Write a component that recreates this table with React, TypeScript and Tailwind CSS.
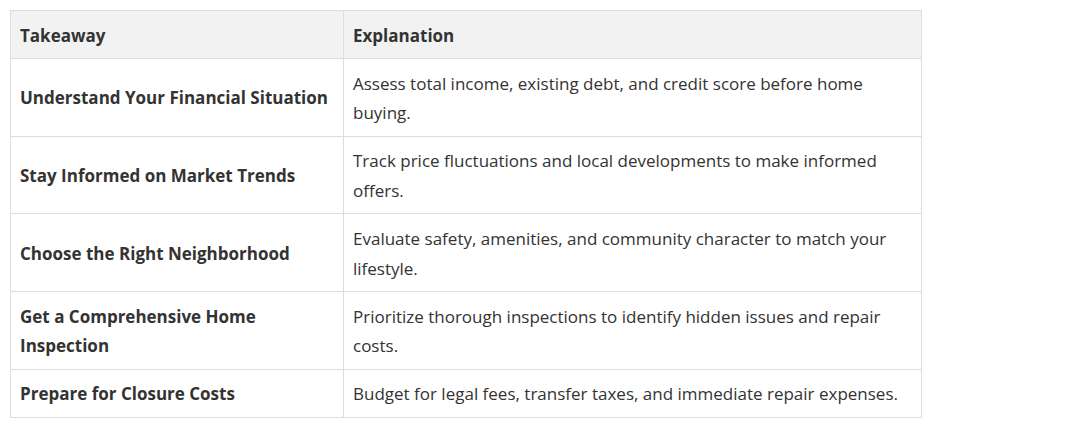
import React from 'react'

interface Fila {
  takeaway: string
  explanation: string
}

const filas: Fila[] = [
  {
    takeaway: 'Understand Your Financial Situation',
    explanation: 'Assess total income, existing debt, and credit score before home buying.'
  },
  {
    takeaway: 'Stay Informed on Market Trends',
    explanation: 'Track price fluctuations and local developments to make informed offers.'
  },
  {
    takeaway: 'Choose the Right Neighborhood',
    explanation: 'Evaluate safety, amenities, and community character to match your lifestyle.'
  },
  {
    takeaway: 'Get a Comprehensive Home Inspection',
    explanation: 'Prioritize thorough inspections to identify hidden issues and repair costs.'
  },
  {
    takeaway: 'Prepare for Closure Costs',
    explanation: 'Budget for legal fees, transfer taxes, and immediate repair expenses.'
  }
]

export default function App() {
  return (
    <main className="w-[1081px] h-[431px] bg-white p-[10px] font-['Open_Sans',sans-serif] text-[#333]">
      <table className="w-[912px] border-collapse table-fixed text-[17px] leading-[1.75]">
        <colgroup>
          <col className="w-[333px]" />
          <col />
        </colgroup>
        <thead>
          <tr className="bg-[#f2f2f2]">
            <th className="border border-[#ddd] px-[9px] pt-[9.6px] pb-[7.6px] text-left font-bold">Takeaway</th>
            <th className="border border-[#ddd] px-[9px] pt-[9.6px] pb-[7.6px] text-left font-bold">Explanation</th>
          </tr>
        </thead>
        <tbody>
          {filas.map((f) => (
            <tr key={f.takeaway}>
              <td className="border border-[#ddd] px-[9px] pt-[9.6px] pb-[7.6px] font-bold align-middle">{f.takeaway}</td>
              <td className="border border-[#ddd] px-[9px] pt-[9.6px] pb-[7.6px] align-middle">{f.explanation}</td>
            </tr>
          ))}
        </tbody>
      </table>
    </main>
  )
}
